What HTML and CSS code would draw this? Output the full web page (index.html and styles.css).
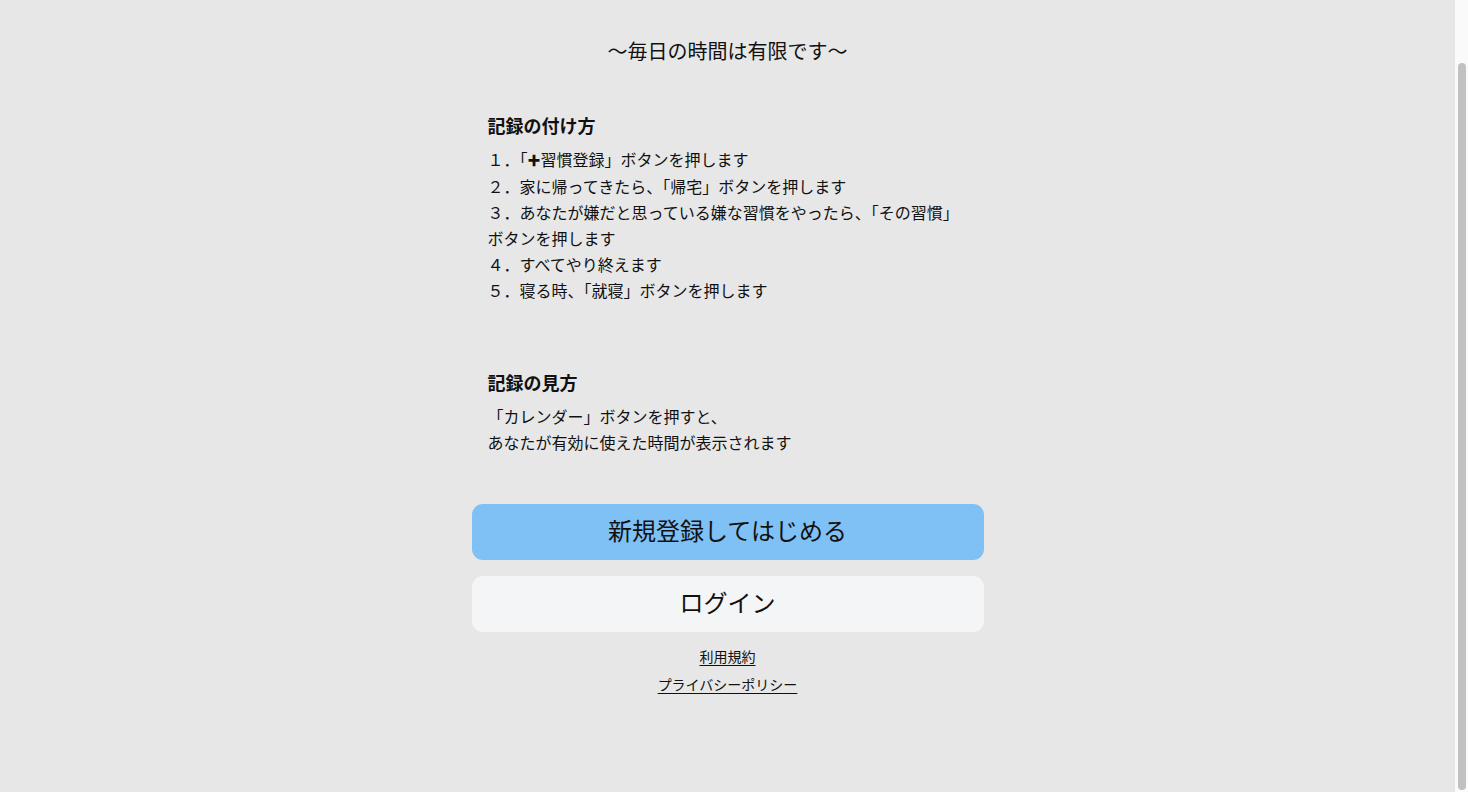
FILE: index.html
```html
<!DOCTYPE html>
<html lang="ja">
  <head>
    <meta charset="UTF-8" />
    <meta name="viewport" content="width=device-width, initial-scale=1.0" />
    <title>使い方</title>
    <link rel="stylesheet" href="styles.css">
  </head>
  <body>
    <div class="page">
      <div class="header"></div>
      <p class="catch">〜毎日の時間は有限です〜</p>

      <div class="guide">
        <section class="block">
          <h2>記録の付け方</h2>
          <p>１．「<span class="plus">✚</span>習慣登録」ボタンを押します</p>
          <p>２．家に帰ってきたら、「帰宅」ボタンを押します</p>
          <p>３．あなたが嫌だと思っている嫌な習慣をやったら、「その習慣」ボタンを押します</p>
          <p>４．すべてやり終えます</p>
          <p>５．寝る時、「就寝」ボタンを押します</p>
        </section>

        <section class="block block-view">
          <h2>記録の見方</h2>
          <p>「カレンダー」ボタンを押すと、<br />あなたが有効に使えた時間が表示されます</p>
        </section>
      </div>

      <div class="actions">
        <button class="btn btn-signup">新規登録してはじめる</button>
        <button class="btn btn-login">ログイン</button>
      </div>

      <div class="links">
        <a href="#">利用規約</a>
        <a href="#">プライバシーポリシー</a>
      </div>
    </div>

    <!-- scrollbar as seen in the capture -->
    <div class="scrollbar"><div class="scrollbar-thumb"></div></div>

    <script>
      window.addEventListener('load', () => {
        window.scrollTo(0, document.body.scrollHeight)
      })
      window.scrollTo(0, document.body.scrollHeight)
    </script>
  </body>
</html>
```

FILE: styles.css
```css
html {
  background-color: #e7e7e7;
}
body {
  margin: 0;
  padding: 0 13px 0 0;
  font-family: "Noto Sans CJK JP", "Noto Sans", sans-serif;
  color: #111111;
  background-color: #e7e7e7;
}
.page {
  width: 512px;
  margin: 0 auto;
  padding-bottom: 98px;
}
.header {
  height: 69px;
}
.catch {
  margin: 36px 0 0;
  font-size: 20px;
  line-height: 28px;
  text-align: center;
}

/* Guide text */
.guide {
  margin-top: 46px;
  padding: 0 16px;
}
.block h2 {
  margin: 0 0 7px;
  font-size: 18px;
  line-height: 28px;
  font-weight: bold;
}
.block p {
  margin: 0;
  font-size: 16px;
  line-height: 26px;
}
.plus {
  font-size: 13px;
  vertical-align: 1px;
}
.block-view {
  margin-top: 65px;
}

/* Buttons */
.actions {
  margin-top: 49px;
  display: flex;
  flex-direction: column;
  gap: 16px;
}
.btn {
  width: 100%;
  height: 56px;
  padding: 0 0 6px;
  border: none;
  border-radius: 11px;
  font-family: "Noto Sans CJK JP", "Noto Sans", sans-serif;
  font-size: 24px;
  color: #111111;
  cursor: pointer;
}
.btn-signup {
  background-color: #7fc0f5;
}
.btn-login {
  background-color: #f4f5f7;
}

/* Footer links */
.links {
  margin-top: 14px;
  display: flex;
  flex-direction: column;
  align-items: center;
  gap: 8px;
}
.links a {
  font-size: 14px;
  line-height: 20px;
  color: #111111;
  text-decoration: underline;
  text-underline-offset: 3px;
}

/* Scrollbar */
.scrollbar {
  position: fixed;
  top: 0;
  right: 0;
  bottom: 0;
  width: 13px;
  background-color: #fafafa;
}
.scrollbar-thumb {
  position: absolute;
  top: 63px;
  bottom: 2px;
  left: 3px;
  width: 8px;
  border-radius: 4px;
  background-color: #c1c1c1;
}
```
